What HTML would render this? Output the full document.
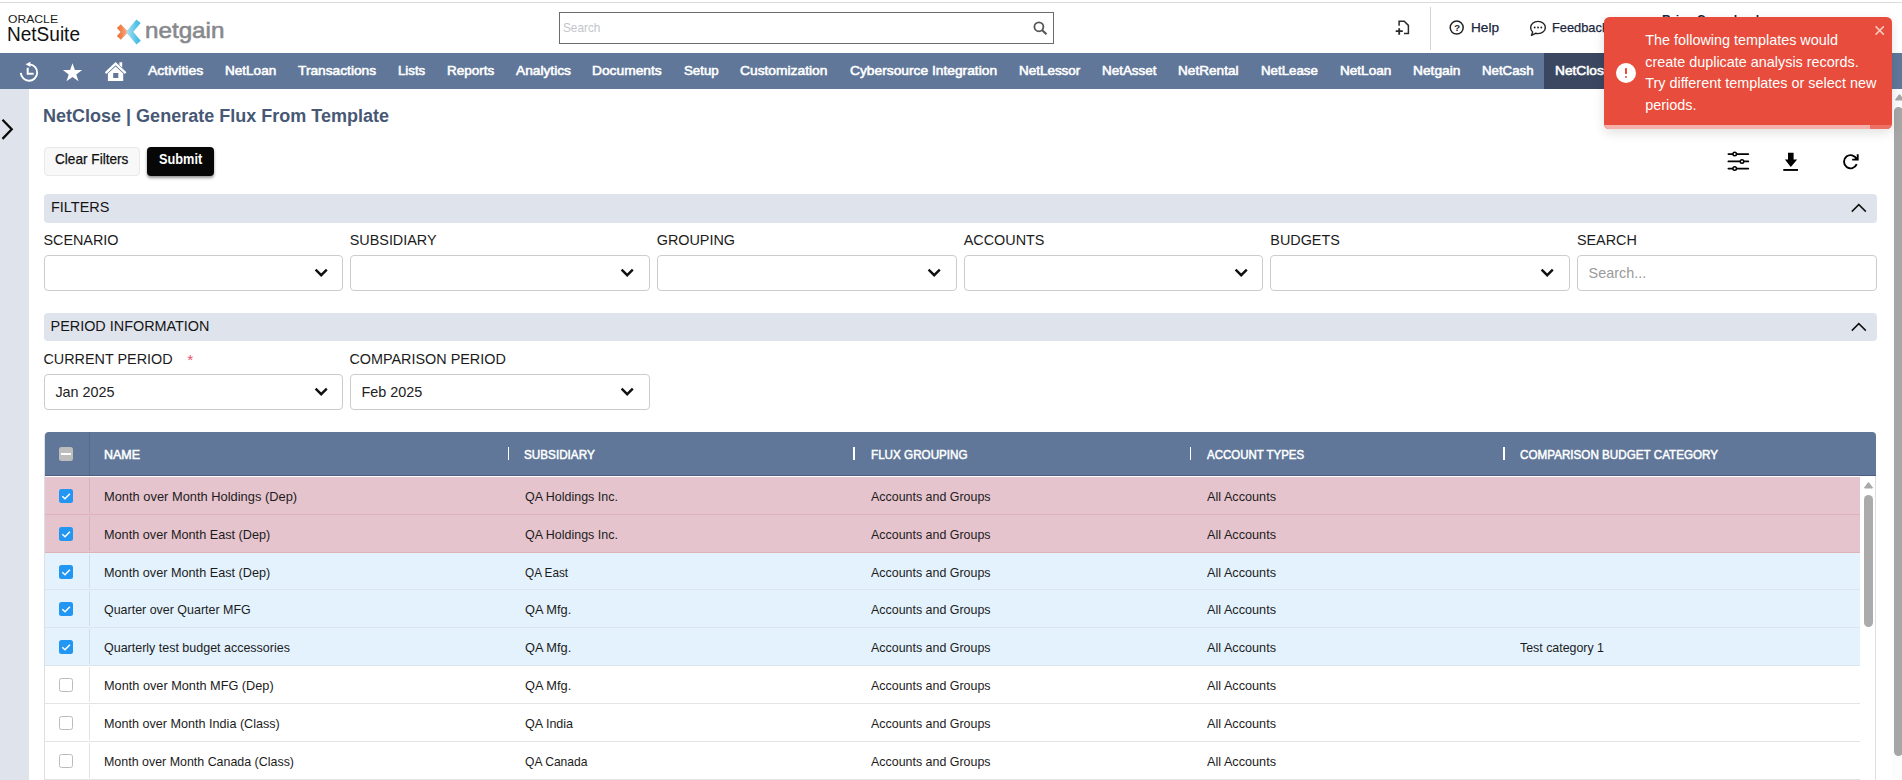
<!DOCTYPE html>
<html lang="en"><head><meta charset="utf-8"><title>NetClose | Generate Flux From Template</title>
<style>
html,body{margin:0;padding:0;}
body{width:1902px;height:780px;overflow:hidden;position:relative;background:#fff;font-family:"Liberation Sans",sans-serif;}
.t{position:absolute;white-space:pre;line-height:20px;display:block;}
.abs{position:absolute;}
svg{position:absolute;overflow:visible;}
</style></head><body>

<div class="abs" style="left:0;top:2px;width:1902px;height:1px;background:#dcdcdc"></div>
<span class="t" style="left:8.00px;top:9.70px;font-size:10.4px;font-weight:400;color:#1a1a1a;font-family:'Liberation Sans', sans-serif;transform:scaleX(1.1700);transform-origin:0 50%;">ORACLE</span>
<span class="t" style="left:7.20px;top:24.16px;font-size:20.6px;font-weight:400;color:#111;font-family:'Liberation Sans', sans-serif;transform:scaleX(0.9241);transform-origin:0 50%;">NetSuite</span>
<svg style="left:110px;top:14px" width="40" height="36" viewBox="0 0 40 36" fill="none">
<defs><linearGradient id="gb" gradientUnits="userSpaceOnUse" x1="15" y1="0" x2="30" y2="0"><stop offset="0" stop-color="#b5e1ee"/><stop offset="1" stop-color="#27b3e5"/></linearGradient>
<linearGradient id="go" gradientUnits="userSpaceOnUse" x1="7" y1="0" x2="18" y2="0"><stop offset="0" stop-color="#ef6a26"/><stop offset="1" stop-color="#f5b191"/></linearGradient></defs>
<path d="M8.9 12.2 L14.4 18 L8.9 23.9" stroke="url(#go)" stroke-width="5.5"/>
<path d="M28.5 7.3 L19.6 17.9 L28.6 28.6" stroke="url(#gb)" stroke-width="5.6" opacity="0.93"/>
</svg>
<span class="t" style="left:145.30px;top:21.47px;font-size:22.6px;font-weight:400;color:#87898d;font-family:'Liberation Sans', sans-serif;transform:scaleX(1.0712);transform-origin:0 50%;-webkit-text-stroke:0.6px #87898d;">netgain</span>
<div class="abs" style="left:559px;top:12px;width:493px;height:30px;border:1px solid #6b6b6b;background:#fff"></div>
<span class="t" style="left:563.00px;top:17.93px;font-size:12.6px;font-weight:400;color:#c3c5ca;font-family:'Liberation Sans', sans-serif;transform:scaleX(0.9372);transform-origin:0 50%;">Search</span>
<svg style="left:1031px;top:19px" width="18" height="18" viewBox="0 0 18 18"><circle cx="7.9" cy="7.8" r="4.5" fill="none" stroke="#555" stroke-width="1.8"/><path d="M11.2 11.2 L15.5 15.2" stroke="#555" stroke-width="2.1"/></svg>
<svg style="left:1394px;top:19px" width="18" height="18" viewBox="0 0 18 18" fill="none" stroke="#2a2a2a" stroke-width="1.5">
<path d="M5.1 6.8 V2.3 H10.2 L14.4 6.4 V14.4 H10"/>
<path d="M1.7 12.2 H8.8 M5.2 9.2 V15.7" stroke-width="1.8"/></svg>
<div class="abs" style="left:1430px;top:7px;width:1px;height:43px;background:#d4d4d4"></div>
<svg style="left:1448px;top:19px" width="18" height="18" viewBox="0 0 18 18"><circle cx="8.7" cy="8.6" r="6.5" fill="none" stroke="#222" stroke-width="1.5"/></svg>
<span class="t" style="left:1454.20px;top:17.97px;font-size:9.6px;font-weight:700;color:#222;font-family:'Liberation Sans', sans-serif;">?</span>
<span class="t" style="left:1471.40px;top:17.80px;font-size:13px;font-weight:400;color:#1b2740;font-family:'Liberation Sans', sans-serif;transform:scaleX(1.0467);transform-origin:0 50%;-webkit-text-stroke:0.25px #1b2740;">Help</span>
<svg style="left:1528px;top:19px" width="20" height="18" viewBox="0 0 20 18"><path d="M10 2.4 C14.3 2.4 17.35 5.1 17.35 8.5 C17.35 11.9 14.3 14.6 10 14.6 C9.1 14.6 8.3 14.5 7.5 14.3 L3.5 16.4 L4.6 13 C3.3 11.9 2.65 10.3 2.65 8.5 C2.65 5.1 5.7 2.4 10 2.4 Z" fill="none" stroke="#222" stroke-width="1.4" stroke-linejoin="round"/><circle cx="6.7" cy="8.5" r="0.95" fill="#222"/><circle cx="10" cy="8.5" r="0.95" fill="#222"/><circle cx="13.3" cy="8.5" r="0.95" fill="#222"/></svg>
<span class="t" style="left:1552.00px;top:17.80px;font-size:13px;font-weight:400;color:#1b2740;font-family:'Liberation Sans', sans-serif;transform:scaleX(0.9861);transform-origin:0 50%;-webkit-text-stroke:0.25px #1b2740;">Feedback</span>
<span class="t" style="left:1662.40px;top:9.93px;font-size:12.6px;font-weight:600;color:#1b2740;font-family:'Liberation Sans', sans-serif;transform:scaleX(0.9768);transform-origin:0 50%;">Brian Crawshank</span>
<div class="abs" style="left:0;top:53px;width:1902px;height:36px;background:#607799"></div>
<div class="abs" style="left:1544px;top:53px;width:80px;height:36px;background:#3b4760"></div>
<span class="t" style="left:147.90px;top:60.86px;font-size:12.8px;font-weight:400;color:#fff;font-family:'Liberation Sans', sans-serif;transform:scaleX(1.0931);transform-origin:0 50%;-webkit-text-stroke:0.55px #fff;">Activities</span>
<span class="t" style="left:225.20px;top:60.86px;font-size:12.8px;font-weight:400;color:#fff;font-family:'Liberation Sans', sans-serif;transform:scaleX(1.0581);transform-origin:0 50%;-webkit-text-stroke:0.55px #fff;">NetLoan</span>
<span class="t" style="left:298.10px;top:60.86px;font-size:12.8px;font-weight:400;color:#fff;font-family:'Liberation Sans', sans-serif;transform:scaleX(1.0728);transform-origin:0 50%;-webkit-text-stroke:0.55px #fff;">Transactions</span>
<span class="t" style="left:398.20px;top:60.86px;font-size:12.8px;font-weight:400;color:#fff;font-family:'Liberation Sans', sans-serif;transform:scaleX(1.0337);transform-origin:0 50%;-webkit-text-stroke:0.55px #fff;">Lists</span>
<span class="t" style="left:447.00px;top:60.86px;font-size:12.8px;font-weight:400;color:#fff;font-family:'Liberation Sans', sans-serif;transform:scaleX(1.0533);transform-origin:0 50%;-webkit-text-stroke:0.55px #fff;">Reports</span>
<span class="t" style="left:515.90px;top:60.86px;font-size:12.8px;font-weight:400;color:#fff;font-family:'Liberation Sans', sans-serif;transform:scaleX(1.0738);transform-origin:0 50%;-webkit-text-stroke:0.55px #fff;">Analytics</span>
<span class="t" style="left:592.20px;top:60.86px;font-size:12.8px;font-weight:400;color:#fff;font-family:'Liberation Sans', sans-serif;transform:scaleX(1.0767);transform-origin:0 50%;-webkit-text-stroke:0.55px #fff;">Documents</span>
<span class="t" style="left:683.60px;top:60.86px;font-size:12.8px;font-weight:400;color:#fff;font-family:'Liberation Sans', sans-serif;transform:scaleX(1.0373);transform-origin:0 50%;-webkit-text-stroke:0.55px #fff;">Setup</span>
<span class="t" style="left:740.10px;top:60.86px;font-size:12.8px;font-weight:400;color:#fff;font-family:'Liberation Sans', sans-serif;transform:scaleX(1.0778);transform-origin:0 50%;-webkit-text-stroke:0.55px #fff;">Customization</span>
<span class="t" style="left:849.60px;top:60.86px;font-size:12.8px;font-weight:400;color:#fff;font-family:'Liberation Sans', sans-serif;transform:scaleX(1.0770);transform-origin:0 50%;-webkit-text-stroke:0.55px #fff;">Cybersource Integration</span>
<span class="t" style="left:1018.50px;top:60.86px;font-size:12.8px;font-weight:400;color:#fff;font-family:'Liberation Sans', sans-serif;transform:scaleX(1.0510);transform-origin:0 50%;-webkit-text-stroke:0.55px #fff;">NetLessor</span>
<span class="t" style="left:1101.50px;top:60.86px;font-size:12.8px;font-weight:400;color:#fff;font-family:'Liberation Sans', sans-serif;transform:scaleX(1.0497);transform-origin:0 50%;-webkit-text-stroke:0.55px #fff;">NetAsset</span>
<span class="t" style="left:1178.40px;top:60.86px;font-size:12.8px;font-weight:400;color:#fff;font-family:'Liberation Sans', sans-serif;transform:scaleX(1.0632);transform-origin:0 50%;-webkit-text-stroke:0.55px #fff;">NetRental</span>
<span class="t" style="left:1261.00px;top:60.86px;font-size:12.8px;font-weight:400;color:#fff;font-family:'Liberation Sans', sans-serif;transform:scaleX(1.0387);transform-origin:0 50%;-webkit-text-stroke:0.55px #fff;">NetLease</span>
<span class="t" style="left:1339.60px;top:60.86px;font-size:12.8px;font-weight:400;color:#fff;font-family:'Liberation Sans', sans-serif;transform:scaleX(1.0601);transform-origin:0 50%;-webkit-text-stroke:0.55px #fff;">NetLoan</span>
<span class="t" style="left:1413.10px;top:60.86px;font-size:12.8px;font-weight:400;color:#fff;font-family:'Liberation Sans', sans-serif;transform:scaleX(1.0746);transform-origin:0 50%;-webkit-text-stroke:0.55px #fff;">Netgain</span>
<span class="t" style="left:1482.20px;top:60.86px;font-size:12.8px;font-weight:400;color:#fff;font-family:'Liberation Sans', sans-serif;transform:scaleX(1.0342);transform-origin:0 50%;-webkit-text-stroke:0.55px #fff;">NetCash</span>
<span class="t" style="left:1555.40px;top:60.86px;font-size:12.8px;font-weight:400;color:#fff;font-family:'Liberation Sans', sans-serif;transform:scaleX(1.0733);transform-origin:0 50%;-webkit-text-stroke:0.55px #fff;">NetClose</span>
<svg style="left:18px;top:61px" width="22" height="22" viewBox="0 0 22 22" fill="none" stroke="#fff">
<path d="M11.8 3.34 A8.2 8.2 0 1 1 2.8 11.9" stroke-width="1.9"/>
<path d="M12.4 0.8 L12.4 6.0 L7.6 3.3 Z" fill="#fff" stroke="none"/>
<path d="M9.7 6.8 V12.7 H15.7" stroke-width="2"/></svg>
<svg style="left:62px;top:62px" width="22" height="20" viewBox="0 0 22 20"><path d="M10.5 1.2 L12.9 8 L20.1 8.1 L14.3 12.4 L16.5 19.2 L10.5 15.1 L4.5 19.2 L6.7 12.4 L0.9 8.1 L8.1 8 Z" fill="#fff"/></svg>
<svg style="left:104px;top:61px" width="24" height="22" viewBox="0 0 24 22">
<path d="M1.6 12.2 L11.6 2.6 L21.6 12.2" fill="none" stroke="#fff" stroke-width="2.3" stroke-linejoin="miter"/>
<path d="M15.4 1.2 H18.2 V6.6 L15.4 4 Z" fill="#fff"/>
<path d="M3.9 12.6 L11.6 5.4 L19.2 12.6 V19.9 H3.9 Z M9.2 12.1 V16.9 H14.3 V12.1 Z" fill="#fff" fill-rule="evenodd"/></svg>
<div class="abs" style="left:0;top:89px;width:29px;height:691px;background:#dfe4ec"></div>
<svg style="left:0;top:117px" width="16" height="24" viewBox="0 0 16 24"><path d="M2.5 2.8 L11.7 12.3 L2.5 21.9" fill="none" stroke="#0a0a0a" stroke-width="2.3"/></svg>
<span class="t" style="left:43.40px;top:106.06px;font-size:18px;font-weight:700;color:#475875;font-family:'Liberation Sans', sans-serif;transform:scaleX(1.0006);transform-origin:0 50%;">NetClose | Generate Flux From Template</span>
<div class="abs" style="left:44px;top:147px;width:94px;height:27px;border:1px solid #e9e9e9;border-radius:4px;background:#f8f8f8"></div>
<span class="t" style="left:55.20px;top:149.38px;font-size:14.2px;font-weight:400;color:#111;font-family:'Liberation Sans', sans-serif;transform:scaleX(0.9599);transform-origin:0 50%;-webkit-text-stroke:0.25px #111;">Clear Filters</span>
<div class="abs" style="left:147px;top:147px;width:67px;height:28.5px;border-radius:4px;background:#070708;box-shadow:0 2px 3px rgba(0,0,0,.42)"></div>
<span class="t" style="left:159.40px;top:149.38px;font-size:14.2px;font-weight:700;color:#fff;font-family:'Liberation Sans', sans-serif;transform:scaleX(0.8985);transform-origin:0 50%;">Submit</span>
<svg style="left:1726px;top:150px" width="26" height="24" viewBox="0 0 26 24" fill="none" stroke="#000" stroke-width="1.75" stroke-linecap="round">
<path d="M2.4 4.1 H22.3 M2.4 11.4 H22.3 M2.4 18.55 H22.3"/>
<circle cx="8.7" cy="4.1" r="1.75" fill="#fff" stroke-width="1.5"/><circle cx="16.0" cy="11.4" r="1.75" fill="#fff" stroke-width="1.5"/><circle cx="8.7" cy="18.55" r="1.75" fill="#fff" stroke-width="1.5"/></svg>
<svg style="left:1782px;top:151px" width="18" height="22" viewBox="0 0 18 22"><path d="M6 1.8 H11.6 V8.5 H15.2 L8.8 15.9 L2.9 8.5 H6 Z" fill="#000"/><rect x="1.3" y="18" width="14.7" height="1.9" fill="#000"/></svg>
<svg style="left:1840px;top:151px" width="22" height="22" viewBox="0 0 22 22" fill="none" stroke="#000" stroke-width="1.9">
<path d="M16.63 8.05 A6.6 6.6 0 1 0 16.72 13.17"/><path d="M17.7 3.3 V8.6 H12.2" stroke-width="1.9"/><path d="M17.2 5.7 V8.1 H14.6 Z" fill="#000" stroke="none"/></svg>
<div class="abs" style="left:44px;top:194px;width:1832.5px;height:28.6px;background:#dfe3ec;border-radius:4px"></div>
<span class="t" style="left:50.60px;top:197.31px;font-size:14.4px;font-weight:400;color:#151515;font-family:'Liberation Sans', sans-serif;transform:scaleX(1.0050);transform-origin:0 50%;">FILTERS</span>
<svg style="left:1850px;top:202px" width="18" height="12" viewBox="0 0 18 12"><path d="M1.8 9.6 L8.8 2.6 L15.8 9.6" fill="none" stroke="#111" stroke-width="1.5"/></svg>
<span class="t" style="left:43.40px;top:230.31px;font-size:14.4px;font-weight:400;color:#1b1b1b;font-family:'Liberation Sans', sans-serif;">SCENARIO</span>
<div class="abs" style="left:44.00px;top:255px;width:297px;height:34px;border:1px solid #ccc;border-radius:4px;background:#fff"></div>
<svg style="left:312.50px;top:267px" width="18" height="12" viewBox="0 0 18 12"><path d="M2.6 2.6 L8.2 8.2 L13.8 2.6" fill="none" stroke="#111" stroke-width="2.4"/></svg>
<span class="t" style="left:349.70px;top:230.31px;font-size:14.4px;font-weight:400;color:#1b1b1b;font-family:'Liberation Sans', sans-serif;">SUBSIDIARY</span>
<div class="abs" style="left:350.00px;top:255px;width:298px;height:34px;border:1px solid #ccc;border-radius:4px;background:#fff"></div>
<svg style="left:618.50px;top:267px" width="18" height="12" viewBox="0 0 18 12"><path d="M2.6 2.6 L8.2 8.2 L13.8 2.6" fill="none" stroke="#111" stroke-width="2.4"/></svg>
<span class="t" style="left:656.70px;top:230.31px;font-size:14.4px;font-weight:400;color:#1b1b1b;font-family:'Liberation Sans', sans-serif;">GROUPING</span>
<div class="abs" style="left:657.00px;top:255px;width:298px;height:34px;border:1px solid #ccc;border-radius:4px;background:#fff"></div>
<svg style="left:925.50px;top:267px" width="18" height="12" viewBox="0 0 18 12"><path d="M2.6 2.6 L8.2 8.2 L13.8 2.6" fill="none" stroke="#111" stroke-width="2.4"/></svg>
<span class="t" style="left:963.70px;top:230.31px;font-size:14.4px;font-weight:400;color:#1b1b1b;font-family:'Liberation Sans', sans-serif;">ACCOUNTS</span>
<div class="abs" style="left:964.00px;top:255px;width:297px;height:34px;border:1px solid #ccc;border-radius:4px;background:#fff"></div>
<svg style="left:1232.50px;top:267px" width="18" height="12" viewBox="0 0 18 12"><path d="M2.6 2.6 L8.2 8.2 L13.8 2.6" fill="none" stroke="#111" stroke-width="2.4"/></svg>
<span class="t" style="left:1270.30px;top:230.31px;font-size:14.4px;font-weight:400;color:#1b1b1b;font-family:'Liberation Sans', sans-serif;">BUDGETS</span>
<div class="abs" style="left:1270.00px;top:255px;width:298px;height:34px;border:1px solid #ccc;border-radius:4px;background:#fff"></div>
<svg style="left:1538.50px;top:267px" width="18" height="12" viewBox="0 0 18 12"><path d="M2.6 2.6 L8.2 8.2 L13.8 2.6" fill="none" stroke="#111" stroke-width="2.4"/></svg>
<span class="t" style="left:1576.90px;top:230.31px;font-size:14.4px;font-weight:400;color:#1b1b1b;font-family:'Liberation Sans', sans-serif;">SEARCH</span>
<div class="abs" style="left:1577.00px;top:255px;width:298px;height:34px;border:1px solid #ccc;border-radius:4px;background:#fff"></div>
<span class="t" style="left:1588.60px;top:263.31px;font-size:14.4px;font-weight:400;color:#9a9a9a;font-family:'Liberation Sans', sans-serif;">Search...</span>
<div class="abs" style="left:44px;top:313px;width:1832.5px;height:28px;background:#dfe3ec;border-radius:4px"></div>
<span class="t" style="left:50.60px;top:316.31px;font-size:14.4px;font-weight:400;color:#151515;font-family:'Liberation Sans', sans-serif;">PERIOD INFORMATION</span>
<svg style="left:1850px;top:321px" width="18" height="12" viewBox="0 0 18 12"><path d="M1.8 9.6 L8.8 2.6 L15.8 9.6" fill="none" stroke="#111" stroke-width="1.5"/></svg>
<span class="t" style="left:43.40px;top:349.31px;font-size:14.4px;font-weight:400;color:#1b1b1b;font-family:'Liberation Sans', sans-serif;">CURRENT PERIOD</span>
<span class="t" style="left:187.20px;top:349.93px;font-size:15.5px;font-weight:400;color:#f0506e;font-family:'Liberation Sans', sans-serif;">*</span>
<span class="t" style="left:349.40px;top:349.31px;font-size:14.4px;font-weight:400;color:#1b1b1b;font-family:'Liberation Sans', sans-serif;">COMPARISON PERIOD</span>
<div class="abs" style="left:44.00px;top:374px;width:297px;height:34px;border:1px solid #ccc;border-radius:4px;background:#fff"></div>
<svg style="left:312.50px;top:386px" width="18" height="12" viewBox="0 0 18 12"><path d="M2.6 2.6 L8.2 8.2 L13.8 2.6" fill="none" stroke="#111" stroke-width="2.4"/></svg>
<span class="t" style="left:55.40px;top:382.31px;font-size:14.4px;font-weight:400;color:#222;font-family:'Liberation Sans', sans-serif;">Jan 2025</span>
<div class="abs" style="left:350.00px;top:374px;width:298px;height:34px;border:1px solid #ccc;border-radius:4px;background:#fff"></div>
<svg style="left:618.50px;top:386px" width="18" height="12" viewBox="0 0 18 12"><path d="M2.6 2.6 L8.2 8.2 L13.8 2.6" fill="none" stroke="#111" stroke-width="2.4"/></svg>
<span class="t" style="left:361.40px;top:382.31px;font-size:14.4px;font-weight:400;color:#222;font-family:'Liberation Sans', sans-serif;">Feb 2025</span>
<div class="abs" style="left:44px;top:431.6px;width:1832px;height:360px;border:1px solid #dcdfe3;border-radius:4px 4px 0 0;box-sizing:border-box;background:#fff"></div>
<div class="abs" style="left:44.5px;top:432px;width:1831.5px;height:43px;background:#607799;border-radius:4px 4px 0 0;border-bottom:1px solid #4b5f82;box-sizing:content-box"></div>
<div class="abs" style="left:89px;top:432px;width:1px;height:43.4px;background:#55698b"></div>
<div class="abs" style="left:59px;top:447px;width:14px;height:14px;border-radius:2.5px;background:#bdbdbd"></div>
<div class="abs" style="left:61.1px;top:453.1px;width:9.8px;height:1.5px;background:#fff"></div>
<span class="t" style="left:104.40px;top:444.93px;font-size:12.6px;font-weight:400;color:#fff;font-family:'Liberation Sans', sans-serif;transform:scaleX(0.9893);transform-origin:0 50%;-webkit-text-stroke:0.5px #fff;">NAME</span>
<span class="t" style="left:524.40px;top:444.93px;font-size:12.6px;font-weight:400;color:#fff;font-family:'Liberation Sans', sans-serif;transform:scaleX(0.9295);transform-origin:0 50%;-webkit-text-stroke:0.5px #fff;">SUBSIDIARY</span>
<span class="t" style="left:870.70px;top:444.93px;font-size:12.6px;font-weight:400;color:#fff;font-family:'Liberation Sans', sans-serif;transform:scaleX(0.9265);transform-origin:0 50%;-webkit-text-stroke:0.5px #fff;">FLUX GROUPING</span>
<span class="t" style="left:1206.80px;top:444.93px;font-size:12.6px;font-weight:400;color:#fff;font-family:'Liberation Sans', sans-serif;transform:scaleX(0.9108);transform-origin:0 50%;-webkit-text-stroke:0.5px #fff;">ACCOUNT TYPES</span>
<span class="t" style="left:1520.20px;top:444.93px;font-size:12.6px;font-weight:400;color:#fff;font-family:'Liberation Sans', sans-serif;transform:scaleX(0.9262);transform-origin:0 50%;-webkit-text-stroke:0.5px #fff;">COMPARISON BUDGET CATEGORY</span>
<div class="abs" style="left:507.8px;top:447px;width:1.4px;height:13px;background:#fff"></div>
<div class="abs" style="left:852.6px;top:447px;width:2.4px;height:13px;background:#fff"></div>
<div class="abs" style="left:1189.8px;top:447px;width:1.4px;height:13px;background:#fff"></div>
<div class="abs" style="left:1502.6px;top:447px;width:2.4px;height:13px;background:#fff"></div>
<div class="abs" style="left:45px;top:477px;width:1815px;height:37px;background:#e6c4ce"></div>
<div class="abs" style="left:45px;top:514px;width:1815px;height:1px;background:#dfb2ba"></div>
<div class="abs" style="left:89px;top:478px;width:1px;height:35px;background:#d3b3bd"></div>
<div class="abs" style="left:59px;top:488.90px;width:14px;height:14px;border-radius:2.5px;background:#2196f3"></div>
<svg style="left:59px;top:488.90px" width="14" height="14" viewBox="0 0 14 14"><path d="M3.3 7.2 L6 9.8 L10.9 4.7" fill="none" stroke="#fff" stroke-width="1.5"/></svg>
<span class="t" style="left:104.00px;top:486.86px;font-size:12.8px;font-weight:400;color:#1c1c1c;font-family:'Liberation Sans', sans-serif;transform:scaleX(1.0055);transform-origin:0 50%;">Month over Month Holdings (Dep)</span>
<span class="t" style="left:524.70px;top:486.86px;font-size:12.8px;font-weight:400;color:#1c1c1c;font-family:'Liberation Sans', sans-serif;transform:scaleX(0.9745);transform-origin:0 50%;">QA Holdings Inc.</span>
<span class="t" style="left:870.80px;top:486.86px;font-size:12.8px;font-weight:400;color:#1c1c1c;font-family:'Liberation Sans', sans-serif;transform:scaleX(0.9717);transform-origin:0 50%;">Accounts and Groups</span>
<span class="t" style="left:1206.60px;top:486.86px;font-size:12.8px;font-weight:400;color:#1c1c1c;font-family:'Liberation Sans', sans-serif;transform:scaleX(0.9897);transform-origin:0 50%;">All Accounts</span>
<div class="abs" style="left:45px;top:515px;width:1815px;height:37px;background:#e6c4ce"></div>
<div class="abs" style="left:45px;top:552px;width:1815px;height:1px;background:#dfb2ba"></div>
<div class="abs" style="left:89px;top:516px;width:1px;height:35px;background:#d3b3bd"></div>
<div class="abs" style="left:59px;top:526.70px;width:14px;height:14px;border-radius:2.5px;background:#2196f3"></div>
<svg style="left:59px;top:526.70px" width="14" height="14" viewBox="0 0 14 14"><path d="M3.3 7.2 L6 9.8 L10.9 4.7" fill="none" stroke="#fff" stroke-width="1.5"/></svg>
<span class="t" style="left:104.00px;top:524.86px;font-size:12.8px;font-weight:400;color:#1c1c1c;font-family:'Liberation Sans', sans-serif;transform:scaleX(0.9907);transform-origin:0 50%;">Month over Month East (Dep)</span>
<span class="t" style="left:524.70px;top:524.86px;font-size:12.8px;font-weight:400;color:#1c1c1c;font-family:'Liberation Sans', sans-serif;transform:scaleX(0.9745);transform-origin:0 50%;">QA Holdings Inc.</span>
<span class="t" style="left:870.80px;top:524.86px;font-size:12.8px;font-weight:400;color:#1c1c1c;font-family:'Liberation Sans', sans-serif;transform:scaleX(0.9717);transform-origin:0 50%;">Accounts and Groups</span>
<span class="t" style="left:1206.60px;top:524.86px;font-size:12.8px;font-weight:400;color:#1c1c1c;font-family:'Liberation Sans', sans-serif;transform:scaleX(0.9897);transform-origin:0 50%;">All Accounts</span>
<div class="abs" style="left:45px;top:553px;width:1815px;height:36px;background:#e3f2fd"></div>
<div class="abs" style="left:45px;top:589px;width:1815px;height:1px;background:#dbe5ed"></div>
<div class="abs" style="left:89px;top:554px;width:1px;height:34px;background:#d0dce6"></div>
<div class="abs" style="left:59px;top:564.50px;width:14px;height:14px;border-radius:2.5px;background:#2196f3"></div>
<svg style="left:59px;top:564.50px" width="14" height="14" viewBox="0 0 14 14"><path d="M3.3 7.2 L6 9.8 L10.9 4.7" fill="none" stroke="#fff" stroke-width="1.5"/></svg>
<span class="t" style="left:104.00px;top:562.86px;font-size:12.8px;font-weight:400;color:#1c1c1c;font-family:'Liberation Sans', sans-serif;transform:scaleX(0.9907);transform-origin:0 50%;">Month over Month East (Dep)</span>
<span class="t" style="left:524.70px;top:562.86px;font-size:12.8px;font-weight:400;color:#1c1c1c;font-family:'Liberation Sans', sans-serif;transform:scaleX(0.9179);transform-origin:0 50%;">QA East</span>
<span class="t" style="left:870.80px;top:562.86px;font-size:12.8px;font-weight:400;color:#1c1c1c;font-family:'Liberation Sans', sans-serif;transform:scaleX(0.9717);transform-origin:0 50%;">Accounts and Groups</span>
<span class="t" style="left:1206.60px;top:562.86px;font-size:12.8px;font-weight:400;color:#1c1c1c;font-family:'Liberation Sans', sans-serif;transform:scaleX(0.9897);transform-origin:0 50%;">All Accounts</span>
<div class="abs" style="left:45px;top:590px;width:1815px;height:37px;background:#e3f2fd"></div>
<div class="abs" style="left:45px;top:627px;width:1815px;height:1px;background:#dbe5ed"></div>
<div class="abs" style="left:89px;top:591px;width:1px;height:35px;background:#d0dce6"></div>
<div class="abs" style="left:59px;top:602.30px;width:14px;height:14px;border-radius:2.5px;background:#2196f3"></div>
<svg style="left:59px;top:602.30px" width="14" height="14" viewBox="0 0 14 14"><path d="M3.3 7.2 L6 9.8 L10.9 4.7" fill="none" stroke="#fff" stroke-width="1.5"/></svg>
<span class="t" style="left:104.00px;top:599.86px;font-size:12.8px;font-weight:400;color:#1c1c1c;font-family:'Liberation Sans', sans-serif;transform:scaleX(0.9730);transform-origin:0 50%;">Quarter over Quarter MFG</span>
<span class="t" style="left:524.70px;top:599.86px;font-size:12.8px;font-weight:400;color:#1c1c1c;font-family:'Liberation Sans', sans-serif;transform:scaleX(1.0014);transform-origin:0 50%;">QA Mfg.</span>
<span class="t" style="left:870.80px;top:599.86px;font-size:12.8px;font-weight:400;color:#1c1c1c;font-family:'Liberation Sans', sans-serif;transform:scaleX(0.9717);transform-origin:0 50%;">Accounts and Groups</span>
<span class="t" style="left:1206.60px;top:599.86px;font-size:12.8px;font-weight:400;color:#1c1c1c;font-family:'Liberation Sans', sans-serif;transform:scaleX(0.9897);transform-origin:0 50%;">All Accounts</span>
<div class="abs" style="left:45px;top:628px;width:1815px;height:37px;background:#e3f2fd"></div>
<div class="abs" style="left:45px;top:665px;width:1815px;height:1px;background:#dbe5ed"></div>
<div class="abs" style="left:89px;top:629px;width:1px;height:35px;background:#d0dce6"></div>
<div class="abs" style="left:59px;top:640.10px;width:14px;height:14px;border-radius:2.5px;background:#2196f3"></div>
<svg style="left:59px;top:640.10px" width="14" height="14" viewBox="0 0 14 14"><path d="M3.3 7.2 L6 9.8 L10.9 4.7" fill="none" stroke="#fff" stroke-width="1.5"/></svg>
<span class="t" style="left:104.00px;top:637.86px;font-size:12.8px;font-weight:400;color:#1c1c1c;font-family:'Liberation Sans', sans-serif;transform:scaleX(0.9752);transform-origin:0 50%;">Quarterly test budget accessories</span>
<span class="t" style="left:524.70px;top:637.86px;font-size:12.8px;font-weight:400;color:#1c1c1c;font-family:'Liberation Sans', sans-serif;transform:scaleX(1.0014);transform-origin:0 50%;">QA Mfg.</span>
<span class="t" style="left:870.80px;top:637.86px;font-size:12.8px;font-weight:400;color:#1c1c1c;font-family:'Liberation Sans', sans-serif;transform:scaleX(0.9717);transform-origin:0 50%;">Accounts and Groups</span>
<span class="t" style="left:1206.60px;top:637.86px;font-size:12.8px;font-weight:400;color:#1c1c1c;font-family:'Liberation Sans', sans-serif;transform:scaleX(0.9897);transform-origin:0 50%;">All Accounts</span>
<span class="t" style="left:1520.00px;top:637.86px;font-size:12.8px;font-weight:400;color:#1c1c1c;font-family:'Liberation Sans', sans-serif;transform:scaleX(0.9680);transform-origin:0 50%;">Test category 1</span>
<div class="abs" style="left:45px;top:666px;width:1815px;height:37px;background:#ffffff"></div>
<div class="abs" style="left:45px;top:703px;width:1815px;height:1px;background:#e4e4e4"></div>
<div class="abs" style="left:89px;top:667px;width:1px;height:35px;background:#e2e2e2"></div>
<div class="abs" style="left:59px;top:677.90px;width:12px;height:12px;border-radius:2.5px;border:1px solid #bcbcbc;background:#fff"></div>
<span class="t" style="left:104.00px;top:675.86px;font-size:12.8px;font-weight:400;color:#1c1c1c;font-family:'Liberation Sans', sans-serif;transform:scaleX(0.9942);transform-origin:0 50%;">Month over Month MFG (Dep)</span>
<span class="t" style="left:524.70px;top:675.86px;font-size:12.8px;font-weight:400;color:#1c1c1c;font-family:'Liberation Sans', sans-serif;transform:scaleX(1.0014);transform-origin:0 50%;">QA Mfg.</span>
<span class="t" style="left:870.80px;top:675.86px;font-size:12.8px;font-weight:400;color:#1c1c1c;font-family:'Liberation Sans', sans-serif;transform:scaleX(0.9717);transform-origin:0 50%;">Accounts and Groups</span>
<span class="t" style="left:1206.60px;top:675.86px;font-size:12.8px;font-weight:400;color:#1c1c1c;font-family:'Liberation Sans', sans-serif;transform:scaleX(0.9897);transform-origin:0 50%;">All Accounts</span>
<div class="abs" style="left:45px;top:704px;width:1815px;height:37px;background:#ffffff"></div>
<div class="abs" style="left:45px;top:741px;width:1815px;height:1px;background:#e4e4e4"></div>
<div class="abs" style="left:89px;top:705px;width:1px;height:35px;background:#e2e2e2"></div>
<div class="abs" style="left:59px;top:715.70px;width:12px;height:12px;border-radius:2.5px;border:1px solid #bcbcbc;background:#fff"></div>
<span class="t" style="left:104.00px;top:713.86px;font-size:12.8px;font-weight:400;color:#1c1c1c;font-family:'Liberation Sans', sans-serif;transform:scaleX(0.9847);transform-origin:0 50%;">Month over Month India (Class)</span>
<span class="t" style="left:524.70px;top:713.86px;font-size:12.8px;font-weight:400;color:#1c1c1c;font-family:'Liberation Sans', sans-serif;transform:scaleX(0.9798);transform-origin:0 50%;">QA India</span>
<span class="t" style="left:870.80px;top:713.86px;font-size:12.8px;font-weight:400;color:#1c1c1c;font-family:'Liberation Sans', sans-serif;transform:scaleX(0.9717);transform-origin:0 50%;">Accounts and Groups</span>
<span class="t" style="left:1206.60px;top:713.86px;font-size:12.8px;font-weight:400;color:#1c1c1c;font-family:'Liberation Sans', sans-serif;transform:scaleX(0.9897);transform-origin:0 50%;">All Accounts</span>
<div class="abs" style="left:45px;top:742px;width:1815px;height:37px;background:#ffffff"></div>
<div class="abs" style="left:45px;top:779px;width:1815px;height:1px;background:#e4e4e4"></div>
<div class="abs" style="left:89px;top:743px;width:1px;height:35px;background:#e2e2e2"></div>
<div class="abs" style="left:59px;top:753.50px;width:12px;height:12px;border-radius:2.5px;border:1px solid #bcbcbc;background:#fff"></div>
<span class="t" style="left:104.00px;top:751.86px;font-size:12.8px;font-weight:400;color:#1c1c1c;font-family:'Liberation Sans', sans-serif;transform:scaleX(0.9713);transform-origin:0 50%;">Month over Month Canada (Class)</span>
<span class="t" style="left:524.70px;top:751.86px;font-size:12.8px;font-weight:400;color:#1c1c1c;font-family:'Liberation Sans', sans-serif;transform:scaleX(0.9445);transform-origin:0 50%;">QA Canada</span>
<span class="t" style="left:870.80px;top:751.86px;font-size:12.8px;font-weight:400;color:#1c1c1c;font-family:'Liberation Sans', sans-serif;transform:scaleX(0.9717);transform-origin:0 50%;">Accounts and Groups</span>
<span class="t" style="left:1206.60px;top:751.86px;font-size:12.8px;font-weight:400;color:#1c1c1c;font-family:'Liberation Sans', sans-serif;transform:scaleX(0.9897);transform-origin:0 50%;">All Accounts</span>
<div class="abs" style="left:1860px;top:476.4px;width:15px;height:310px;background:#fff"></div>
<svg style="left:1863px;top:481px" width="11" height="9" viewBox="0 0 11 9"><path d="M5.5 1.2 Q5.9 1.2 6.3 1.7 L9.6 6.3 Q10.2 7.6 8.8 7.6 H2.2 Q0.8 7.6 1.4 6.3 L4.7 1.7 Q5.1 1.2 5.5 1.2 Z" fill="#a9a9a9"/></svg>
<div class="abs" style="left:1864px;top:495px;width:9px;height:131.5px;border-radius:4.5px;background:#ababab"></div>
<div class="abs" style="left:1892px;top:89px;width:10px;height:691px;background:#fcfcfc"></div>
<svg style="left:1893.5px;top:93px" width="11" height="9" viewBox="0 0 11 9"><path d="M5.5 1.2 Q5.9 1.2 6.3 1.7 L9.6 6.3 Q10.2 7.6 8.8 7.6 H2.2 Q0.8 7.6 1.4 6.3 L4.7 1.7 Q5.1 1.2 5.5 1.2 Z" fill="#a6a6a6"/></svg>
<div class="abs" style="left:1894.3px;top:107px;width:9px;height:649px;border-radius:4.5px;background:#a6a6a6"></div>
<div class="abs" style="left:1604px;top:17px;width:288px;height:112px;border-radius:5.5px;background:#e74c3c;box-shadow:0 4px 12px rgba(0,0,0,.12);overflow:hidden">
<div class="abs" style="left:0;bottom:0;width:288px;height:4px;background:#ec7063"></div>
<div class="abs" style="left:0;bottom:0;width:266px;height:4px;background:#f5b0a9"></div>
</div>
<div class="abs" style="left:1616px;top:62.8px;width:20px;height:20px;border-radius:50%;background:#fff"></div>
<div class="abs" style="left:1625px;top:67.8px;width:2.1px;height:6.4px;border-radius:0.6px;background:#e74c3c"></div>
<div class="abs" style="left:1624.85px;top:75.8px;width:2.4px;height:2.4px;border-radius:50%;background:#e74c3c"></div>
<svg style="left:1873px;top:24px" width="14" height="14" viewBox="0 0 14 14"><path d="M2.6 2.4 L10.8 10.6 M10.8 2.4 L2.6 10.6" stroke="#f9c9c4" stroke-width="1.5" fill="none"/></svg>
<span class="t" style="left:1645.20px;top:30.31px;font-size:14.4px;font-weight:400;color:#fff;font-family:'Liberation Sans', sans-serif;">The following templates would</span>
<span class="t" style="left:1645.20px;top:52.31px;font-size:14.4px;font-weight:400;color:#fff;font-family:'Liberation Sans', sans-serif;">create duplicate analysis records.</span>
<span class="t" style="left:1645.20px;top:73.31px;font-size:14.4px;font-weight:400;color:#fff;font-family:'Liberation Sans', sans-serif;">Try different templates or select new</span>
<span class="t" style="left:1645.20px;top:95.31px;font-size:14.4px;font-weight:400;color:#fff;font-family:'Liberation Sans', sans-serif;">periods.</span>
</body></html>
